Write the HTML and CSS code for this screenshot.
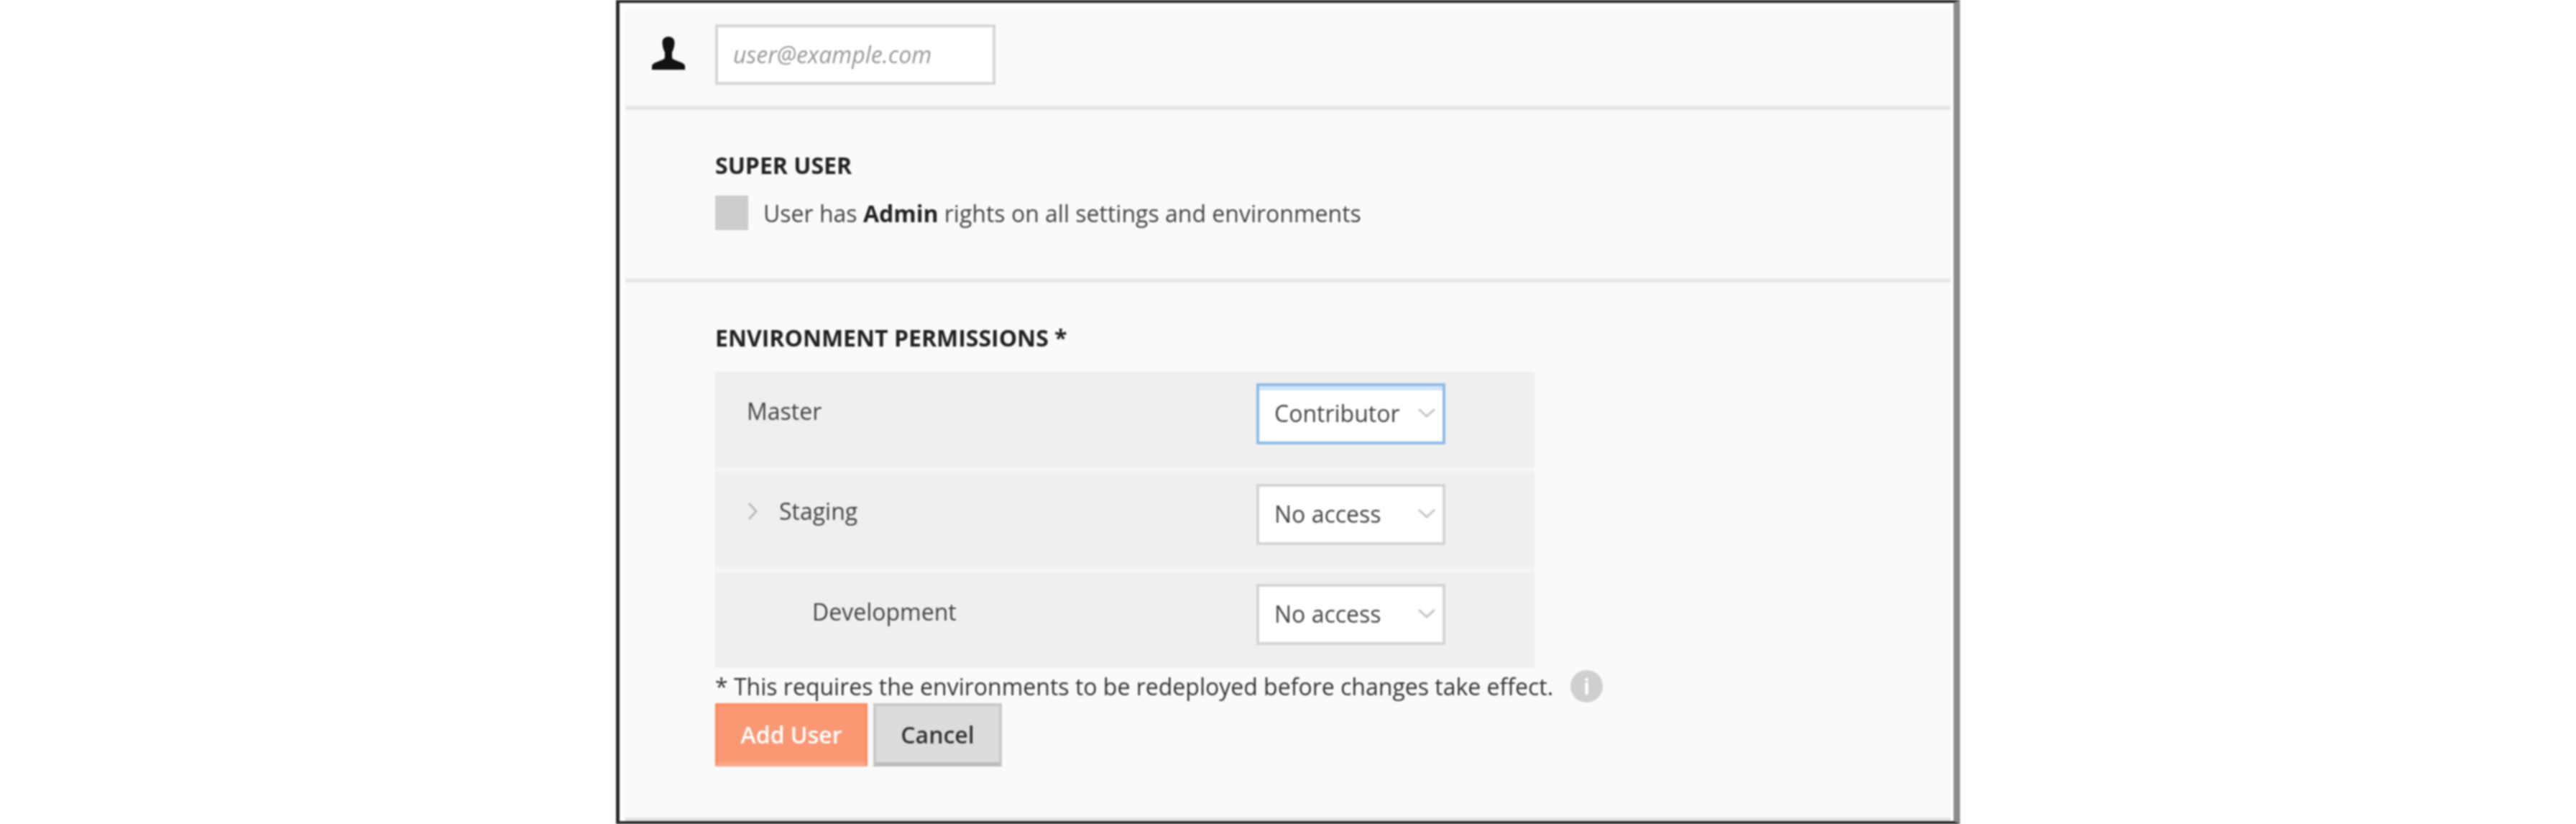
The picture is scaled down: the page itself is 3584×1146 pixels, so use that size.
FILE: index.html
```html
<!DOCTYPE html>
<html lang="en">
<head>
<meta charset="utf-8">
<title>Add user</title>
<link rel="stylesheet" href="styles.css">
</head>
<body>
<main class="frame">
  <section class="user-row">
    <svg class="user-icon" viewBox="0 0 46 46" aria-hidden="true"><path d="M23 0c-5 0-8.500 3-8.500 8 0 5 1.500 10 3.500 14v6c0 2-1 3-3 4l-10 4c-3 1-5 3-5 5v5h46v-5c0-2-2-4-5-5l-10-4c-2-1-3-2-3-4v-6c2-4 3.500-9 3.500-14 0-5-3.500-8-8.500-8z"/></svg>
    <div class="text-input">user@example.com</div>
  </section>
  <section class="section">
    <h2 class="heading">SUPER USER</h2>
    <div class="check-row">
      <span class="checkbox"></span>
      <span class="check-label">User has <b>Admin</b> rights on all settings and environments</span>
    </div>
  </section>
  <section class="section last">
    <h2 class="heading">ENVIRONMENT PERMISSIONS *</h2>
    <div class="perm-table">
      <div class="perm-row">
        <span class="perm-name">Master</span>
        <div class="select focused">Contributor<svg class="caret" viewBox="0 0 26 14"><path d="M2 2l11 10L24 2"/></svg></div>
      </div>
      <div class="perm-row">
        <span class="perm-name"><svg class="expander" viewBox="0 0 16 26"><path d="M3 2l10 11L3 24"/></svg>Staging</span>
        <div class="select">No access<svg class="caret" viewBox="0 0 26 14"><path d="M2 2l11 10L24 2"/></svg></div>
      </div>
      <div class="perm-row">
        <span class="perm-name nested">Development</span>
        <div class="select">No access<svg class="caret" viewBox="0 0 26 14"><path d="M2 2l11 10L24 2"/></svg></div>
      </div>
    </div>
    <div class="note">
      <span>* This requires the environments to be redeployed before changes take effect.</span>
      <span class="info">i</span>
    </div>
    <div class="actions">
      <button class="btn primary">Add User</button>
      <button class="btn">Cancel</button>
    </div>
  </section>
</main>
</body>
</html>
```
FILE: styles.css
```css
* { box-sizing: border-box; }
html, body { margin: 0; height: 1146px; overflow: hidden; background: #fff; }
body { display: flex; justify-content: center; font-family: "Open Sans", sans-serif; color: #444; }
.frame {
  width: 1870px; height: 1146px;
  padding: 8px 4px 0 8px;
  background: #fdfdfd;
  border-top: 4px solid #2a2a2a;
  border-left: 5px solid #2a2a2a;
  border-right: 9px solid #8c8c8c;
  border-bottom: 4px solid #2a2a2a;
  filter: blur(0.8px);
}
.user-row {
  display: flex; align-items: center; gap: 42px;
  height: 141px; padding: 0 0 8px 37px;
  background: #f9f9f9;
  border-bottom: 6px solid #e6e6e6;
}
.user-icon { width: 46px; height: 46px; fill: #111; margin-top: -3px; }
.text-input {
  width: 390px; height: 84px; padding-left: 21px;
  display: flex; align-items: center;
  background: #fff; border: 4px solid #d6d6d6;
  font-size: 32px; font-style: italic; color: #999;
}
.section { padding: 57px 0 67px 125px; background: #fafafa; border-bottom: 6px solid #e6e6e6; }
.section.last { height: 749px; padding-bottom: 0; border-bottom: 5px solid #e2e2e2; }
.heading { margin: 0; font-size: 32px; line-height: 40px; font-weight: 700; color: #222; }
.check-row { display: flex; align-items: center; gap: 21px; margin-top: 22px; }
.checkbox { width: 46px; height: 48px; background: #ccc; }
.check-label { font-size: 32px; color: #444; }
.check-label b { color: #222; }
.perm-table { width: 1140px; margin-top: 27px; display: flex; flex-direction: column; gap: 7px; background: #f5f5f5; }
.perm-row {
  height: 132.5px; padding: 16px 124px 0 44px;
  display: flex; justify-content: space-between; align-items: flex-start;
  background: #efefef;
  font-size: 32px;
}
.perm-name { display: flex; align-items: center; height: 76px; color: #444; }
.perm-name.nested { padding-left: 91px; }
.expander { width: 16px; height: 26px; margin-right: 29px; fill: none; stroke: #bbb; stroke-width: 3; }
.select {
  position: relative;
  width: 263px; height: 85px; padding-left: 21px; padding-bottom: 2px;
  display: flex; align-items: center;
  background: #fff; border: 4px solid #d4d4d4;
  font-size: 32px; color: #444;
}
.select.focused { border-color: #8dbde9; box-shadow: inset 0 6px 0 #d3e6f7; }
.caret { position: absolute; right: 9px; top: 30px; width: 26px; height: 14px; fill: none; stroke: #c4c4c4; stroke-width: 3; }
.note { display: flex; align-items: center; gap: 24px; height: 45px; margin-top: 3.5px; font-size: 32px; color: #333; }
.info {
  width: 45px; height: 45px; border-radius: 50%;
  display: flex; align-items: center; justify-content: center;
  background: #cfcfcf; color: #fff; font-size: 30px; font-weight: 700;
}
.actions { display: flex; gap: 8px; margin-top: 1px; }
.btn {
  width: 179px; height: 88px; padding: 0;
  font: 600 32px "Open Sans", sans-serif;
  background: #dcdcdc; color: #333;
  border: 4px solid #c9c9c9; border-bottom: 6px solid #bcbcbc;
}
.btn.primary { width: 212px; background: #fa9874; color: #fff; border-color: #fd8c62; border-bottom-color: #fba788; }
```
